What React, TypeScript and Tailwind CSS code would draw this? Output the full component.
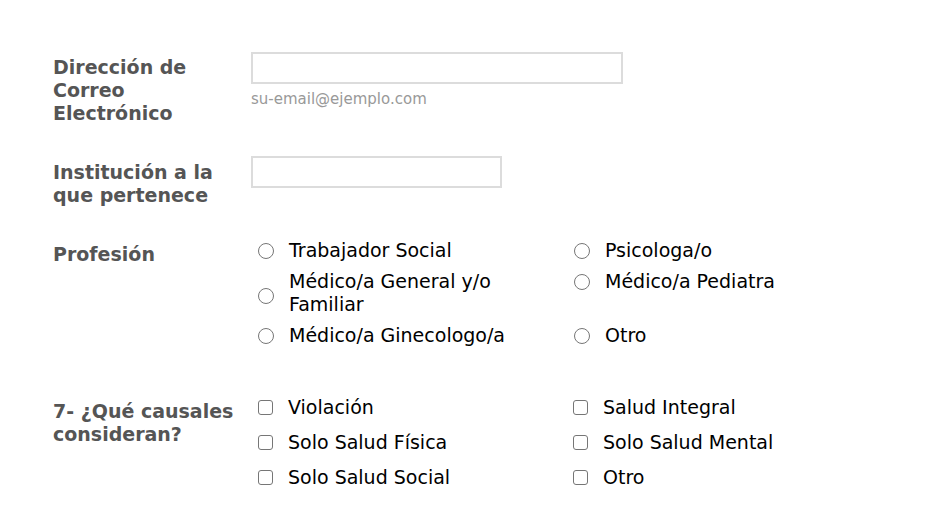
import React from "react";

const font = { fontFamily: '"DejaVu Sans", Verdana, sans-serif' };

function Radio({ label }: { label: string }) {
  return (
    <div className="flex items-center">
      <span className="w-[16px] h-[16px] rounded-full border border-[#767676] bg-white shrink-0 ml-[1px]" />
      <span className="ml-[15px] text-[19px] leading-[23px] text-black">{label}</span>
    </div>
  );
}

function Check({ label }: { label: string }) {
  return (
    <div className="flex items-center">
      <span className="w-[15px] h-[15px] rounded-[3px] border border-[#767676] bg-white shrink-0 ml-[1px]" />
      <span className="ml-[15px] text-[19px] leading-[23px] text-black">{label}</span>
    </div>
  );
}

export default function App() {
  return (
    <div className="w-[930px] h-[516px] bg-white overflow-hidden" style={font}>
      <div className="pt-[52px] pl-[53px]">
        <div className="flex">
          <div className="w-[198px] pt-[4px] pr-4 text-[19px] leading-[23px] font-bold text-[#555]">
            Dirección de Correo Electrónico
          </div>
          <div>
            <div className="w-[372px] h-[32px] border-2 border-[#dcdcdc] bg-white" />
            <div className="mt-[5px] text-[15px] leading-[20px] text-[#999]">su-email@ejemplo.com</div>
          </div>
        </div>

        <div className="flex mt-[31px]">
          <div className="w-[198px] pt-[5px] pr-4 text-[19px] leading-[23px] font-bold text-[#555]">
            Institución a la que pertenece
          </div>
          <div className="w-[251px] h-[32px] border-2 border-[#dcdcdc] bg-white" />
        </div>

        <div className="flex mt-[32px]">
          <div className="w-[198px] pt-[4px] text-[19px] leading-[23px] font-bold text-[#555]">Profesión</div>
          <div className="grid grid-cols-[316px_315px] gap-y-[8px] pl-[6px]">
            <Radio label="Trabajador Social" />
            <Radio label="Psicologa/o" />
            <div className="flex items-center">
              <span className="w-[16px] h-[16px] rounded-full border border-[#767676] bg-white shrink-0 ml-[1px] mt-[6px]" />
              <span className="ml-[15px] text-[19px] leading-[23px] text-black w-[240px]">Médico/a General y/o Familiar</span>
            </div>
            <div className="flex items-start">
              <span className="w-[16px] h-[16px] rounded-full border border-[#767676] bg-white shrink-0 ml-[1px] mt-[4px]" />
              <span className="ml-[15px] text-[19px] leading-[23px] text-black">Médico/a Pediatra</span>
            </div>
            <Radio label="Médico/a Ginecologo/a" />
            <Radio label="Otro" />
          </div>
        </div>

        <div className="flex mt-[49px]">
          <div className="w-[198px] pt-[4px] text-[19px] leading-[23px] font-bold text-[#555]">
            7- ¿Qué causales consideran?
          </div>
          <div className="grid grid-cols-[315px_315px] gap-y-[12px] pl-[6px]">
            <Check label="Violación" />
            <Check label="Salud Integral" />
            <Check label="Solo Salud Física" />
            <Check label="Solo Salud Mental" />
            <Check label="Solo Salud Social" />
            <Check label="Otro" />
          </div>
        </div>
      </div>
    </div>
  );
}
